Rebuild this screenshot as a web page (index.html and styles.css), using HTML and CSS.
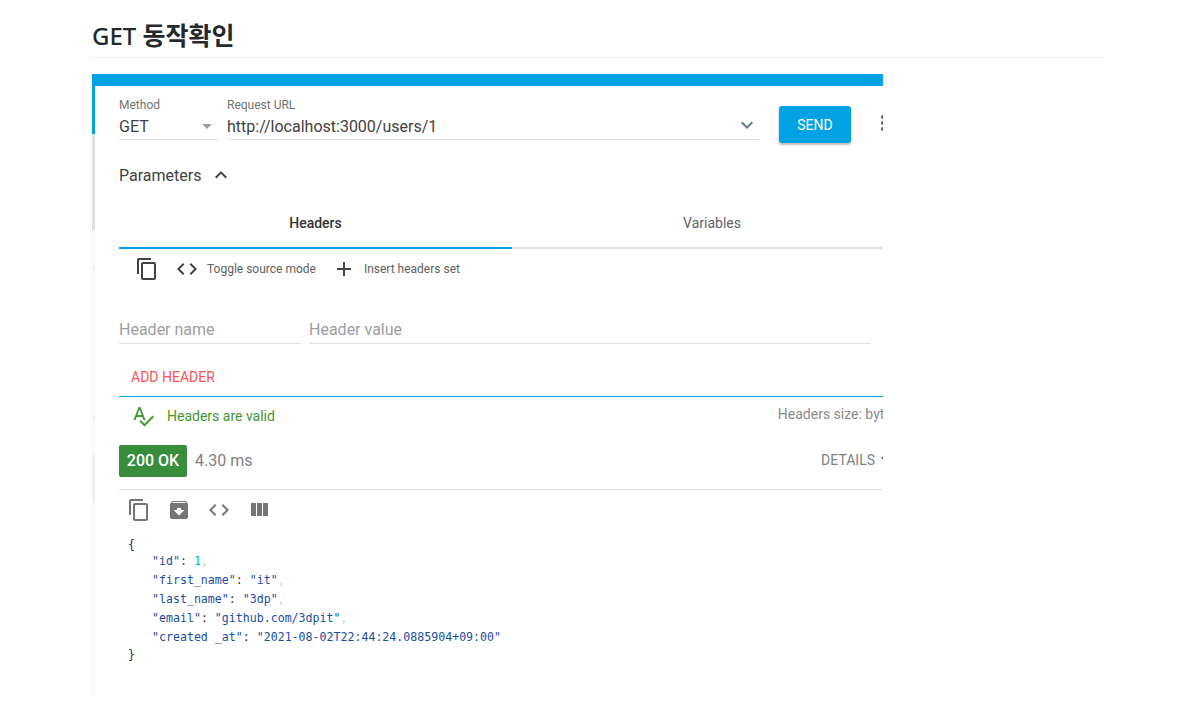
FILE: index.html
```html
<!DOCTYPE html>
<html lang="ko">
<head>
<meta charset="utf-8">
<title>GET 동작확인</title>
<link rel="stylesheet" href="styles.css">
</head>
<body>
<svg class="sprite" aria-hidden="true">
  <symbol id="i-copy" viewBox="0 0 24 24"><path d="M16 1H4c-1.1 0-2 .9-2 2v14h2V3h12V1zm3 4H8c-1.1 0-2 .9-2 2v14c0 1.1.9 2 2 2h11c1.1 0 2-.9 2-2V7c0-1.1-.9-2-2-2zm0 16H8V7h11v14z"/></symbol>
  <symbol id="i-code" viewBox="0 0 24 24"><path d="M9.4 16.6L4.8 12l4.6-4.6L8 6l-6 6 6 6 1.4-1.4zm5.2 0l4.6-4.6-4.6-4.6L16 6l6 6-6 6-1.4-1.4z"/></symbol>
</svg>
<main class="page">
  <h2 class="title">GET <span class="title-ko">동작확인</span></h2>
  <section class="widget">
    <div class="topbar"></div>
    <div class="body">
      <div class="strip">
        <div class="seg seg-blue"></div>
        <div class="seg seg-grey"></div>
        <div class="seg seg-pale"></div>
        <div class="seg seg-tick"></div>
        <div class="seg seg-pale2"></div>
        <div class="seg seg-tick"></div>
        <div class="seg seg-pale3"></div>
        <div class="seg seg-mid"></div>
        <div class="seg seg-pale4"></div>
      </div>
      <div class="content">
        <div class="request">
          <div class="field field-method">
            <span class="label">Method</span>
            <div class="value">GET<span class="caret"></span></div>
          </div>
          <div class="field field-url">
            <span class="label">Request URL</span>
            <div class="value">http://localhost:3000/users/1
              <svg class="url-chevron" viewBox="0 0 24 24"><path d="M16.59 8.59L12 13.17 7.41 8.59 6 10l6 6 6-6z"/></svg>
            </div>
          </div>
          <button class="send">SEND</button>
          <svg class="more" viewBox="0 0 24 24"><path d="M12 8c1.1 0 2-.9 2-2s-.9-2-2-2-2 .9-2 2 .9 2 2 2zm0 2c-1.1 0-2 .9-2 2s.9 2 2 2 2-.9 2-2-.9-2-2-2zm0 6c-1.1 0-2 .9-2 2s.9 2 2 2 2-.9 2-2-.9-2-2-2z"/></svg>
        </div>

        <div class="params">Parameters
          <svg class="params-chevron" viewBox="0 0 24 24"><path d="M12 8l-6 6 1.41 1.41L12 10.83l4.59 4.58L18 14z"/></svg>
        </div>

        <div class="tabs">
          <div class="tab tab-active">Headers</div>
          <div class="tab">Variables</div>
        </div>

        <div class="tools">
          <svg class="ic ic-copy"><use href="#i-copy"/></svg>
          <svg class="ic ic-code"><use href="#i-code"/></svg>
          <span class="tool-label">Toggle source mode</span>
          <svg class="ic ic-add" viewBox="0 0 24 24"><path d="M19 13h-6v6h-2v-6H5v-2h6V5h2v6h6v2z"/></svg>
          <span class="tool-label">Insert headers set</span>
        </div>

        <div class="inputs">
          <div class="ph ph-name">Header name</div>
          <div class="ph ph-value">Header value</div>
        </div>

        <div class="add">ADD HEADER</div>

        <div class="valid">
          <div class="valid-left">
            <svg class="ic-spell" viewBox="0 0 24 24"><path d="M12.45 16h2.09L9.43 3H7.57L2.46 16h2.09l1.12-3h5.64l1.14 3zm-6.02-5L8.5 5.48 10.57 11H6.43zm15.16.59l-8.09 8.09L9.83 16l-1.41 1.41 5.09 5.09L23 13l-1.41-1.41z"/></svg>
            <span>Headers are valid</span>
          </div>
          <span class="size">Headers size: bytes</span>
        </div>

        <div class="status">
          <span class="chip">200 OK</span>
          <span class="time">4.30 ms</span>
          <span class="details">DETAILS<svg class="details-chevron" viewBox="0 0 24 24"><path d="M16.59 8.59L12 13.17 7.41 8.59 6 10l6 6 6-6z"/></svg></span>
        </div>

        <div class="resp-tools">
          <svg class="ic2"><use href="#i-copy"/></svg>
          <svg class="ic2" viewBox="0 0 24 24"><path d="M20.54 5.23l-1.39-1.68C18.88 3.21 18.47 3 18 3H6c-.47 0-.88.21-1.16.55L3.46 5.23C3.17 5.57 3 6.02 3 6.5V19c0 1.1.9 2 2 2h14c1.1 0 2-.9 2-2V6.5c0-.48-.17-.93-.46-1.27zM12 17.5L6.5 12H10v-2h4v2h3.5L12 17.5zM5.12 5l.81-1h12l.94 1H5.12z"/></svg>
          <svg class="ic2"><use href="#i-code"/></svg>
          <svg class="ic2" viewBox="0 0 24 24"><path d="M10 18h5V5h-5v13zm-6 0h5V5H4v13zM16 5v13h5V5h-5z"/></svg>
        </div>

        <div class="code">
          <div class="line line-open">{</div>
          <div class="line line-in"><span class="k">"id"</span><span class="p">:</span> <span class="n">1</span><span class="c">,</span></div>
          <div class="line line-in"><span class="k">"first_name"</span><span class="p">:</span> <span class="k">"it"</span><span class="c">,</span></div>
          <div class="line line-in"><span class="k">"last_name"</span><span class="p">:</span> <span class="k">"3dp"</span><span class="c">,</span></div>
          <div class="line line-in"><span class="k">"email"</span><span class="p">:</span> <span class="k">"github.com/3dpit"</span><span class="c">,</span></div>
          <div class="line line-in"><span class="k">"created _at"</span><span class="p">:</span> <span class="k">"2021-08-02T22:44:24.0885904+09:00"</span></div>
          <div class="line line-close">}</div>
        </div>
      </div>
    </div>
  </section>
</main>
</body>
</html>
```
FILE: styles.css
```css
* { box-sizing: border-box; }
html, body { margin: 0; padding: 0; background: #fff; }
body { font-family: Roboto, "Noto Sans", sans-serif; color: #333; height: 714px; overflow: hidden; }
.sprite { display: none; }

.page { width: 1012px; margin-left: 92px; }
.title {
  margin: 0 0 16px;
  height: 58px;
  padding-top: 18px;
  font-family: "Noto Sans", "Noto Sans CJK KR", sans-serif;
  font-size: 24px;
  line-height: 33px;
  font-weight: 500;
  color: #24292e;
  border-bottom: 1px solid #eaecef;
}
.title-ko { font-family: "Noto Sans CJK KR", sans-serif; font-size: 25px; font-weight: 700; }

.widget { width: 791px; height: 622px; overflow: hidden; }
.topbar { height: 12px; background: #00a2e3; }
.body { display: flex; height: 610px; }

.strip { flex: 0 0 3px; display: flex; flex-direction: column; }
.seg-blue { height: 48px; background: #00a2e3; }
.seg-grey { height: 96px; background: #e0e0e0; }
.seg-pale { height: 38px; background: #f8f8f8; }
.seg-tick { height: 1px; background: #e0e0e0; }
.seg-pale2 { height: 148px; background: #f8f8f8; }
.seg-pale3 { height: 36px; background: #f8f8f8; }
.seg-mid { height: 48px; background: #eeeeee; }
.seg-pale4 { height: 194px; background: #f8f8f8; }

.content { flex: 0 0 830px; padding-left: 24px; }

.request { display: flex; align-items: flex-start; height: 59px; padding-top: 12px; }
.field { display: flex; flex-direction: column; height: 42px; border-bottom: 1px solid #e0e0e0; }
.field-method { width: 99px; margin-right: 9px; }
.field-url { width: 532px; margin-right: 20px; }
.label { font-size: 12px; line-height: 15px; color: #737373; }
.value {
  position: relative;
  display: flex;
  justify-content: space-between;
  align-items: center;
  height: 26px;
  padding-top: 1px;
  font-size: 16px;
  line-height: 24px;
  color: #424242;
}
.caret {
  width: 0; height: 0;
  margin-right: 6px;
  border-left: 5px solid transparent;
  border-right: 5px solid transparent;
  border-top: 5px solid #9e9e9e;
}
.url-chevron { width: 24px; height: 24px; fill: #607d8b; position: absolute; right: 0; top: 0; }
.send {
  width: 72px; height: 37px;
  margin-top: 8px;
  border: 0; border-radius: 3px;
  background: #00a2e3;
  color: #fff;
  font: 400 14px/37px Roboto, sans-serif;
  box-shadow: 0 2px 2px rgba(0,0,0,.2), 0 1px 4px rgba(0,0,0,.12);
}
.more { width: 24px; height: 24px; margin: 13px 0 0 20px; fill: #616161; flex: none; }

.params {
  display: flex; align-items: center;
  height: 46px;
  margin-top: 7px;
  margin-bottom: 1px;
  font-size: 16px;
  color: #424242;
}
.params-chevron { width: 24px; height: 24px; margin-left: 8px; fill: #424242; }

.tabs { display: flex; height: 50px; border-bottom: 2px solid #e0e0e0; }
.tab {
  height: 50px;
  flex: 0 0 400px;
  padding-top: 15px;
  text-align: center;
  font-size: 14px;
  line-height: 18px;
  font-weight: 400;
  color: #5f6368;
}
.tab-active { flex-basis: 393px; color: #333; font-weight: 500; border-bottom: 2px solid #00a2e3; }

.tools { display: flex; align-items: center; height: 40px; padding-left: 16px; }
.ic { fill: #424242; flex: none; }
.ic-copy { width: 24px; height: 24px; margin-right: 16px; }
.ic-code { width: 24px; height: 24px; margin-right: 8px; }
.ic-add { width: 24px; height: 24px; margin: 0 8px 0 16px; }
.tool-label { font-size: 12px; color: #616161; }

.inputs { display: flex; margin-top: 20px; height: 35px; }
.ph {
  height: 35px;
  font-size: 16px;
  line-height: 20px;
  padding-top: 11px;
  color: #9e9e9e;
  border-bottom: 1px solid #e0e0e0;
}
.ph-name { width: 182px; margin-right: 8px; }
.ph-value { width: 562px; }

.add {
  height: 53px;
  padding: 24px 0 0 12px;
  font-size: 14px;
  line-height: 18px;
  color: #ff5252;
  border-bottom: 1px solid #00a2e3;
}

.valid { display: flex; justify-content: space-between; align-items: flex-start; width: 780px; height: 48px; }
.valid-left { display: flex; align-items: center; height: 38px; padding-left: 12px; font-size: 14px; color: #43982f; }
.ic-spell { width: 24px; height: 24px; margin-right: 12px; fill: #43982f; }
.size { flex: none; font-size: 14px; line-height: 18px; padding-top: 8px; color: #8a8a8a; }

.status { display: flex; align-items: center; width: 780px; height: 45px; border-bottom: 1px solid #e0e0e0; padding-bottom: 13px; }
.chip {
  display: block;
  width: 68px; height: 32px;
  background: #388e3c;
  border-radius: 2px;
  color: #fff;
  font-size: 16px;
  font-weight: 500;
  line-height: 32px;
  text-align: center;
}
.time { margin-left: 8px; font-size: 16px; color: #808080; }
.details { margin-left: auto; padding-bottom: 1px; display: flex; align-items: center; font-size: 14px; color: #808080; }
.details-chevron { width: 24px; height: 24px; fill: #757575; }

.resp-tools { display: flex; gap: 16px; align-items: center; height: 40px; padding-left: 8px; }
.ic2 { width: 24px; height: 24px; fill: #757575; flex: none; }

.code {
  margin: 3px 0 0 9px;
  font-family: "DejaVu Sans Mono", monospace;
  font-size: 11.6px;
  line-height: 19px;
  color: #333;
}
.line { white-space: pre; height: 19px; }
.line-in { padding-left: 24px; }
.line-open { padding-top: 2px; }
.line-close { margin-top: -2px; }
.k { color: #1a4ea0; }
.n { color: #00a8f0; }
.p { color: #333; }
.c { color: #ccc; }
```
